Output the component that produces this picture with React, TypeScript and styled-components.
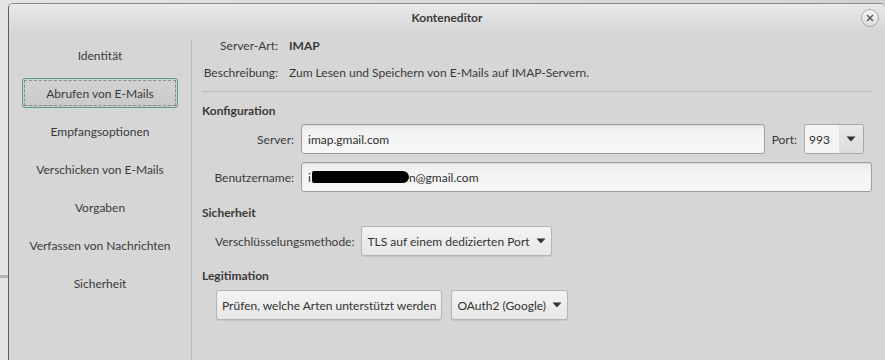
import React from "react";
import styled, { createGlobalStyle } from "styled-components";

const Global = createGlobalStyle`
  html, body { margin: 0; padding: 0; }
  body {
    width: 885px;
    height: 360px;
    overflow: hidden;
    font-family: "Lato", "Noto Sans", sans-serif;
    font-size: 12px;
    color: #3a3a3a;
    background:
      linear-gradient(to bottom, transparent 275px, #b4b4b4 275px, #b4b4b4 278px, transparent 278px),
      linear-gradient(to right, #e4e4e4, #d2d2d2);
  }
`;

const Window = styled.div`
  margin: 3px 0 0 8px;
  width: 876px;
  height: 360px;
  border: 1px solid #8a8a8a;
  border-left-color: #5c5c5c;
  border-right: none;
  border-radius: 5px 5px 0 0;
  background: #d6d6d6;
  display: flex;
  flex-direction: column;
  overflow: hidden;
`;

const TitleBar = styled.div`
  height: 27px;
  flex: none;
  display: flex;
  align-items: center;
  justify-content: center;
  position: relative;
  background: linear-gradient(to bottom, #e9e9e9, #d7d7d7);
  font-weight: 700;
  font-size: 12px;
  color: #3a3a3a;
`;

const CloseButton = styled.div`
  position: absolute;
  right: 6px;
  top: 5px;
  width: 16px;
  height: 16px;
  border-radius: 50%;
  border: 1px solid #a8a8a8;
  background: linear-gradient(to bottom, #f4f4f4, #dcdcdc);
  display: flex;
  align-items: center;
  justify-content: center;
`;

const Body = styled.div`
  flex: 1;
  display: flex;
`;

const Sidebar = styled.div`
  width: 182px;
  flex: none;
  margin-top: 8px;
  border-right: 1px solid #bdbdbd;
  display: flex;
  flex-direction: column;
  align-items: center;
  gap: 8px;
  padding-top: 1px;
`;

const NavItem = styled.div<{ $active?: boolean }>`
  width: 156px;
  height: 30px;
  box-sizing: border-box;
  display: flex;
  align-items: center;
  justify-content: center;
  border-radius: 3px;
  border: 1px solid ${(p) => (p.$active ? "#5c9e80" : "transparent")};
  background: ${(p) =>
    p.$active ? "linear-gradient(to bottom, #d2d2d2, #c9c9c9)" : "transparent"};
  outline: ${(p) => (p.$active ? "1px dashed #8a8a8a" : "none")};
  outline-offset: -3px;
  color: #3a3a3a;
`;

const Content = styled.div`
  flex: 1;
  display: flex;
  flex-direction: column;
  padding: 4px 13px 0 10px;
`;

const InfoRow = styled.div<{ $mt?: number }>`
  display: flex;
  align-items: center;
  height: 20px;
  gap: 11px;
  margin-top: ${(p) => p.$mt ?? 0}px;
`;

const InfoLabel = styled.div`
  width: 76px;
  text-align: right;
  white-space: nowrap;
`;

const InfoValue = styled.div<{ $bold?: boolean }>`
  font-weight: ${(p) => (p.$bold ? 700 : 400)};
  white-space: nowrap;
`;

const Separator = styled.div`
  height: 1px;
  background: #bcbcbc;
  margin-top: 9px;
`;

const Heading = styled.div<{ $mt: number }>`
  height: 20px;
  display: flex;
  align-items: center;
  font-weight: 700;
  margin-top: ${(p) => p.$mt}px;
`;

const FieldRow = styled.div<{ $mt: number; $indent?: number }>`
  display: flex;
  align-items: center;
  height: 30px;
  gap: 7px;
  margin-top: ${(p) => p.$mt}px;
  padding-left: ${(p) => p.$indent ?? 0}px;
`;

const FieldLabel = styled.div<{ $width?: number }>`
  width: ${(p) => (p.$width ? `${p.$width}px` : "auto")};
  text-align: right;
  white-space: nowrap;
  flex: none;
`;

const TextInput = styled.div`
  flex: 1;
  height: 30px;
  box-sizing: border-box;
  border: 1px solid #9e9e9e;
  border-radius: 3px;
  background: linear-gradient(to bottom, #ececec, #f4f4f4 40%, #f6f6f6);
  box-shadow: inset 0 1px 1px rgba(0, 0, 0, 0.08);
  display: flex;
  align-items: center;
  padding: 0 6px;
  color: #2e2e2e;
  white-space: nowrap;
`;

const Redacted = styled.span`
  display: inline-block;
  width: 97px;
  height: 12px;
  background: #000;
  border-radius: 2px 6px 6px 2px;
  margin: 0 0 0 1px;
  vertical-align: -1px;
`;

const PortBox = styled.div`
  width: 60px;
  height: 30px;
  box-sizing: border-box;
  border: 1px solid #a8a8a8;
  border-radius: 3px;
  display: flex;
  overflow: hidden;
  flex: none;
`;

const PortValue = styled.div`
  flex: 1;
  background: #f4f4f4;
  display: flex;
  align-items: center;
  padding-left: 4px;
  color: #2e2e2e;
`;

const PortArrow = styled.div`
  width: 24px;
  background: linear-gradient(to bottom, #e8e8e8, #dcdcdc);
  display: flex;
  align-items: center;
  justify-content: center;
`;

const Button = styled.div`
  height: 30px;
  box-sizing: border-box;
  border: 1px solid #b4b4b4;
  border-radius: 3px;
  background: linear-gradient(to bottom, #f3f3f3, #e7e7e7);
  box-shadow: 0 1px 0 rgba(0, 0, 0, 0.08);
  display: flex;
  align-items: center;
  gap: 6px;
  padding: 0 5px;
  white-space: nowrap;
  color: #333;
  flex: none;
`;

const ButtonRow = styled.div<{ $mt: number; $indent: number }>`
  display: flex;
  gap: 9px;
  margin-top: ${(p) => p.$mt}px;
  padding-left: ${(p) => p.$indent}px;
`;

const Arrow = () => (
  <svg width="10" height="6" viewBox="0 0 10 6">
    <path d="M0.5 0.5 L9.5 0.5 L5 5.5 Z" fill="#333" />
  </svg>
);

const navItems = [
  "Identität",
  "Abrufen von E-Mails",
  "Empfangsoptionen",
  "Verschicken von E-Mails",
  "Vorgaben",
  "Verfassen von Nachrichten",
  "Sicherheit",
];

export default function App() {
  return (
    <>
      <Global />
      <Window>
        <TitleBar>
          Konteneditor
          <CloseButton>
            <svg width="8" height="8" viewBox="0 0 8 8">
              <path d="M1 1 L7 7 M7 1 L1 7" stroke="#555" strokeWidth="1.4" />
            </svg>
          </CloseButton>
        </TitleBar>
        <Body>
          <Sidebar>
            {navItems.map((n, i) => (
              <NavItem key={n} $active={i === 1}>
                {n}
              </NavItem>
            ))}
          </Sidebar>
          <Content>
            <InfoRow>
              <InfoLabel>Server-Art:</InfoLabel>
              <InfoValue $bold>IMAP</InfoValue>
            </InfoRow>
            <InfoRow $mt={7}>
              <InfoLabel>Beschreibung:</InfoLabel>
              <InfoValue>Zum Lesen und Speichern von E-Mails auf IMAP-Servern.</InfoValue>
            </InfoRow>
            <Separator />
            <Heading $mt={8}>Konfiguration</Heading>
            <FieldRow $mt={4}>
              <FieldLabel $width={92}>Server:</FieldLabel>
              <TextInput>imap.gmail.com</TextInput>
              <FieldLabel>Port:</FieldLabel>
              <PortBox>
                <PortValue>993</PortValue>
                <PortArrow>
                  <Arrow />
                </PortArrow>
              </PortBox>
              <span style={{ width: 1 }} />
            </FieldRow>
            <FieldRow $mt={8}>
              <FieldLabel $width={92}>Benutzername:</FieldLabel>
              <TextInput>
                i<Redacted />n@gmail.com
              </TextInput>
            </FieldRow>
            <Heading $mt={10}>Sicherheit</Heading>
            <FieldRow $mt={4} $indent={13}>
              <FieldLabel>Verschlüsselungsmethode:</FieldLabel>
              <Button>
                TLS auf einem dedizierten Port
                <Arrow />
              </Button>
            </FieldRow>
            <Heading $mt={9}>Legitimation</Heading>
            <ButtonRow $mt={5} $indent={14}>
              <Button>Prüfen, welche Arten unterstützt werden</Button>
              <Button>
                OAuth2 (Google)
                <Arrow />
              </Button>
            </ButtonRow>
          </Content>
        </Body>
      </Window>
    </>
  );
}
